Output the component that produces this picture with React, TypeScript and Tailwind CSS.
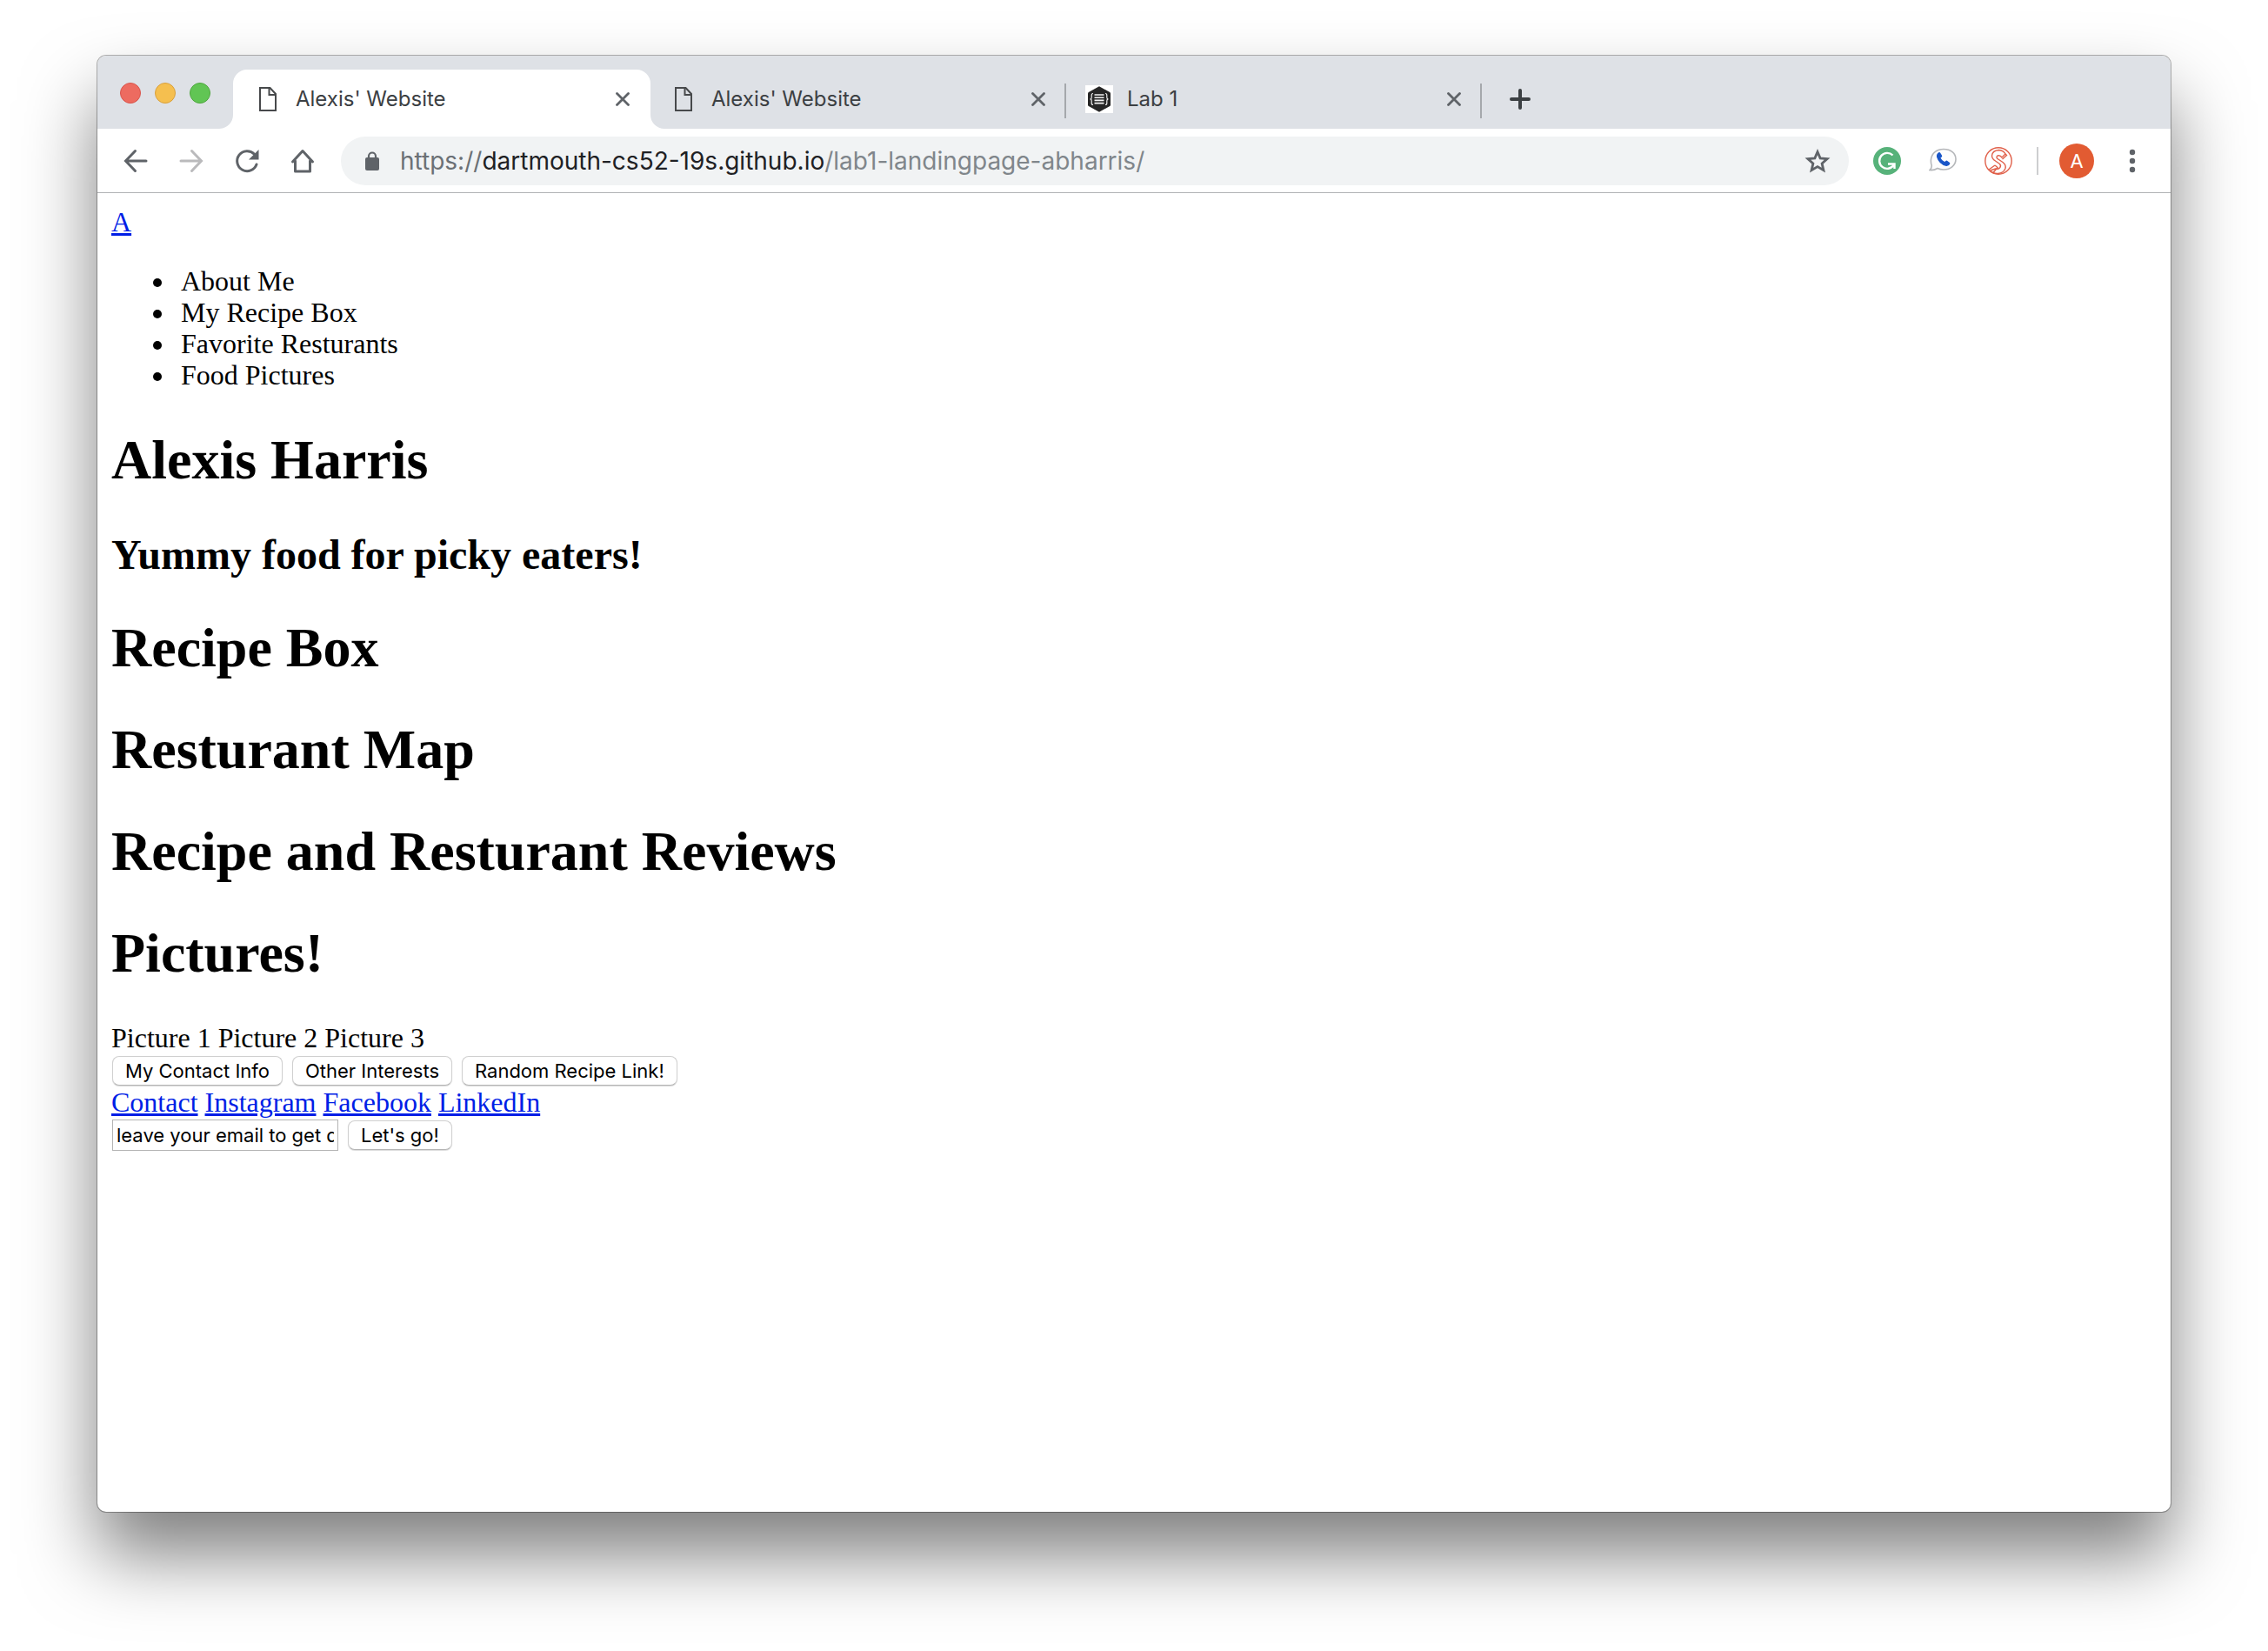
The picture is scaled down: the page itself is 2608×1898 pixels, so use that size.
import type { ReactNode } from "react";

function FileIcon() {
  return (
    <svg className="h-7 w-5 shrink-0" viewBox="0 0 20 28" fill="none" stroke="#47494b" strokeWidth="2" aria-hidden="true">
      <path d="M1 1h11.5L19 8v19H1z" />
      <path d="M11.5 1v8H19" />
    </svg>
  );
}

function LabIcon() {
  return (
    <svg className="h-8 w-8 shrink-0" viewBox="0 0 32 32" aria-hidden="true">
      <path d="M0 0h32v32H0z" fill="#fff" />
      <path d="M16 1.2 28.2 8Q29 8.600 29 9.500v13q0 1-.8 1.500L16 30.800 3.800 24Q3 23.500 3 22.500v-13q0-.9.8-1.500z" fill="#262626" />
      <path d="M10.500 11h11M10.500 14.200h11M10.500 17.400h11M10.500 20.600h11" stroke="#f2f2f2" strokeWidth="1.600" />
      <path d="M9 9.500q-1.800 0-1.800 2V14q0 1.700-1.500 1.900Q7.200 16.200 7.200 18v2.500q0 2 1.800 2M23 9.500q1.800 0 1.800 2V14q0 1.700 1.500 1.900Q24.800 16.200 24.800 18v2.500q0 2-1.800 2" fill="none" stroke="#eee" strokeWidth="1.200" />
    </svg>
  );
}

function CloseButton() {
  return (
    <button type="button" aria-label="Close tab" className="flex size-4 shrink-0 items-center justify-center">
      <svg className="size-4" viewBox="0 0 16 16" stroke="#5f6368" strokeWidth="2.800" strokeLinecap="round" aria-hidden="true">
        <path d="M1.500 1.500l13 13M14.500 1.500l-13 13" />
      </svg>
    </button>
  );
}

function Tab({ icon, title, active = false }: { icon: ReactNode; title: string; active?: boolean }) {
  return (
    <div
      className={
        active
          ? "relative flex h-17 w-120 items-center rounded-t-2xl bg-white px-6"
          : "relative flex h-17 w-[478px] items-center pr-6 pl-[22px]"
      }
    >
      {active && (
        <>
          <svg className="absolute bottom-0 -left-4 size-4" viewBox="0 0 16 16" aria-hidden="true">
            <path d="M16 0v16H0A16 16 0 0 0 16 0z" fill="#fff" />
          </svg>
          <svg className="absolute -right-4 bottom-0 size-4" viewBox="0 0 16 16" aria-hidden="true">
            <path d="M0 0v16h16A16 16 0 0 1 0 0z" fill="#fff" />
          </svg>
        </>
      )}
      <span className="flex w-8 justify-center">{icon}</span>
      <span className="ml-4 grow text-[24px] leading-7 text-[#3c4043]">{title}</span>
      <CloseButton />
      {!active && <span className="absolute top-4 right-0 h-10 w-0.5 bg-[#a5a8ac]" />}
    </div>
  );
}

function PageButton({ children }: { children: ReactNode }) {
  return (
    <button
      type="button"
      className="h-[34px] rounded-lg border border-[#d0d0d0] border-b-[#b4b4b4] bg-white px-[14px] font-[Inter,sans-serif] text-[22px] leading-7 shadow-[0_1px_1px_rgba(0,0,0,0.15)]"
    >
      {children}
    </button>
  );
}

const navItems = ["About Me", "My Recipe Box", "Favorite Resturants", "Food Pictures"];
const sections = ["Recipe Box", "Resturant Map", "Recipe and Resturant Reviews", "Pictures!"];
const links = ["Contact", "Instagram", "Facebook", "LinkedIn"];

export default function App() {
  return (
    <div className="flex min-h-screen flex-col overflow-hidden bg-white px-28 pt-16 pb-40 font-[Inter,sans-serif]">
      <div className="flex grow flex-col rounded-[10px] bg-white shadow-[0_0_0_1px_rgba(0,0,0,0.3),0_50px_84px_rgba(0,0,0,0.5)]">
        <header>
          <div className="flex h-21 items-end rounded-t-[10px] bg-[#dee1e6]">
            <div className="flex gap-4 self-start px-[26px] pt-[31px]">
              <button type="button" aria-label="Close" className="size-6 rounded-full border border-[#d9544b] bg-[#ed6b60]" />
              <button type="button" aria-label="Minimize" className="size-6 rounded-full border border-[#d9a03c] bg-[#f5bf4f]" />
              <button type="button" aria-label="Zoom" className="size-6 rounded-full border border-[#4fa73e] bg-[#61c554]" />
            </div>
            <Tab active icon={<FileIcon />} title="Alexis' Website" />
            <Tab icon={<FileIcon />} title="Alexis' Website" />
            <Tab icon={<LabIcon />} title="Lab 1" />
            <button type="button" aria-label="New tab" className="ml-8 flex h-17 items-center">
              <svg className="size-6" viewBox="0 0 24 24" stroke="#3c4043" strokeWidth="4" strokeLinecap="round" aria-hidden="true">
                <path d="M12 2v20M2 12h20" />
              </svg>
            </button>
          </div>

          <div className="flex h-[74px] items-center border-b border-[#b0b2b4] px-7">
            <div className="flex items-center gap-8">
              <button type="button" aria-label="Back">
                <svg className="size-8" viewBox="0 0 32 32" fill="none" stroke="#5f6368" strokeWidth="3" strokeLinecap="round" aria-hidden="true">
                  <path d="M28 16H5M15.500 4.500 4.500 16l11 11.500" />
                </svg>
              </button>
              <button type="button" aria-label="Forward">
                <svg className="size-8" viewBox="0 0 32 32" fill="none" stroke="#bababc" strokeWidth="3" strokeLinecap="round" aria-hidden="true">
                  <path d="M4 16h23M16.500 4.500l11 11.500-11 11.500" />
                </svg>
              </button>
              <button type="button" aria-label="Reload">
                <svg className="size-8" viewBox="0 0 32 32" aria-hidden="true">
                  <path d="M27 20A11.500 11.500 0 1 1 24.500 8.200" fill="none" stroke="#5f6368" strokeWidth="3" strokeLinecap="round" />
                  <path d="M29.500 3v11.500H18z" fill="#5f6368" />
                </svg>
              </button>
              <button type="button" aria-label="Home">
                <svg className="size-8" viewBox="0 0 32 32" fill="none" stroke="#5f6368" strokeWidth="3" strokeLinejoin="round" strokeLinecap="round" aria-hidden="true">
                  <path d="M4.500 17 16 4.500 27.500 17M7.500 16v12h17V16" />
                </svg>
              </button>
            </div>

            <div className="ml-7 flex h-14 grow items-center rounded-full bg-[#f1f3f4] pr-5 pl-7">
              <svg className="h-6 w-4" viewBox="0 0 16 24" aria-hidden="true">
                <rect y="8" width="16" height="15" rx="2" fill="#5f6368" />
                <path d="M4 9V6.500a4 4 0 0 1 8 0V9" fill="none" stroke="#5f6368" strokeWidth="2.200" />
              </svg>
              <a href="https://dartmouth-cs52-19s.github.io/lab1-landingpage-abharris/" className="ml-6 grow text-[28px] leading-9 text-[#80868b]">
                <span className="text-[#6b7075]">https://</span>
                <span className="text-[#202124]">dartmouth-cs52-19s.github.io</span>/lab1-landingpage-abharris/
              </a>
              <button type="button" aria-label="Bookmark this page">
                <svg className="size-8" viewBox="0 0 32 32" fill="none" stroke="#5f6368" strokeWidth="2.800" aria-hidden="true">
                  <path d="M16 5.500l3.100 7.400 8 .7-6 5.300 1.800 7.800L16 22.600l-6.900 4.100 1.800-7.800-6-5.300 8-.7z" />
                </svg>
              </button>
            </div>

            <div className="ml-7 flex items-center gap-8">
              <svg className="size-8" viewBox="0 0 32 32" role="img" aria-label="Grammar checker">
                <circle cx="16" cy="16" r="16" fill="#57b27a" />
                <path d="M22.500 9.500A9 9 0 1 0 23.500 21M17 19.500h7.500V25" fill="none" stroke="#fff" strokeWidth="2.400" />
              </svg>
              <svg className="size-8" viewBox="0 0 32 32" role="img" aria-label="Calls">
                <path d="M17 2.500C25 2.500 31 7 31 14S25 26 17 26q-4 0-7-1.500Q6 27 1 26.500q2.500-2 2.200-5.500Q2 18 2.500 14C3.500 7 9 2.500 17 2.500z" fill="#fdfdfd" stroke="#b5b7ba" strokeWidth="1.600" />
                <path d="M11.300 6.300Q8.500 8 9 11.500q2.500 8.500 11 10.500 3 .3 4.300-2.800.2-1-.6-1.500l-2.700-1.900q-.9-.5-1.600.2l-1.200 1.100q-3.200-1.300-4.700-4.600l1.300-1.100q.7-.8.3-1.700l-1.900-3q-.7-.9-1.900-.4z" fill="#1a56c8" />
              </svg>
              <svg className="size-8" viewBox="0 0 32 32" fill="none" stroke="#e0604a" strokeWidth="1.400" role="img" aria-label="Shopping helper">
                <circle cx="16" cy="16" r="15.200" />
                <path d="M24 8q-2-4-7.500-4.500Q9 4 8.500 10q0 3.500 4 6l5 3.500q2 2 0 4.500-2 2-5 1L6.500 27M24 8l-4 4q-2-3-5-2-2 1.500 0 3.500l6 4q4 3 3 7-2 5.500-8.500 6Q10 31 6.500 27M24 8l1.500 1.500-5 4.500M12 21 5 26M12 21l3 2.500-5 6" />
              </svg>
            </div>
            <span className="mr-6 ml-7 h-8 w-0.5 bg-[#cdced0]" />
            <button type="button" aria-label="Profile" className="size-10 rounded-full bg-[#e25b32] text-[22px] leading-10 text-white">
              A
            </button>
            <button type="button" aria-label="Menu" className="ml-7">
              <svg className="size-8" viewBox="0 0 32 32" fill="#5f6368" aria-hidden="true">
                <circle cx="16" cy="6" r="3.200" />
                <circle cx="16" cy="16" r="3.200" />
                <circle cx="16" cy="26" r="3.200" />
              </svg>
            </button>
          </div>
        </header>

        <main className="px-4 pt-[15px] pb-4 font-['Liberation_Serif',serif] text-[32px] leading-9 text-black">
          <nav>
            <a href="#top" className="text-[#001ee6] underline">A</a>
            <ul className="mt-8 pl-12">
              {navItems.map((item) => (
                <li key={item} className="flex items-center before:mt-1 before:mr-[22px] before:size-[10px] before:rounded-full before:bg-black">
                  {item}
                </li>
              ))}
            </ul>
          </nav>
          <h1 className="mt-[43px] text-[64px] leading-[74px] font-bold">Alexis Harris</h1>
          <h2 className="mt-11 mb-[43px] text-[48px] leading-[55px] font-bold">Yummy food for picky eaters!</h2>
          <div className="mb-[42px] flex flex-col gap-[43px]">
            {sections.map((heading) => (
              <h1 key={heading} className="text-[64px] leading-[74px] font-bold">{heading}</h1>
            ))}
          </div>
          <p>Picture 1 Picture 2 Picture 3</p>
          <div className="flex h-[38px] items-center gap-[11px] pt-0.5 pl-px">
            <PageButton>My Contact Info</PageButton>
            <PageButton>Other Interests</PageButton>
            <PageButton>Random Recipe Link!</PageButton>
          </div>
          <div className="flex gap-2">
            {links.map((link) => (
              <a key={link} href={"#" + link.toLowerCase()} className="text-[#001ee6] underline">{link}</a>
            ))}
          </div>
          <form className="flex h-[38px] items-center gap-[11px] pt-0.5 pl-px" onSubmit={(e) => e.preventDefault()}>
            <input
              type="text"
              aria-label="Email"
              defaultValue="leave your email to get delicious recipes"
              className="h-9 w-65 border border-[#b4b4b4] bg-white px-1 font-[Inter,sans-serif] text-[22px] leading-7"
            />
            <PageButton>Let's go!</PageButton>
          </form>
        </main>
      </div>
    </div>
  );
}
